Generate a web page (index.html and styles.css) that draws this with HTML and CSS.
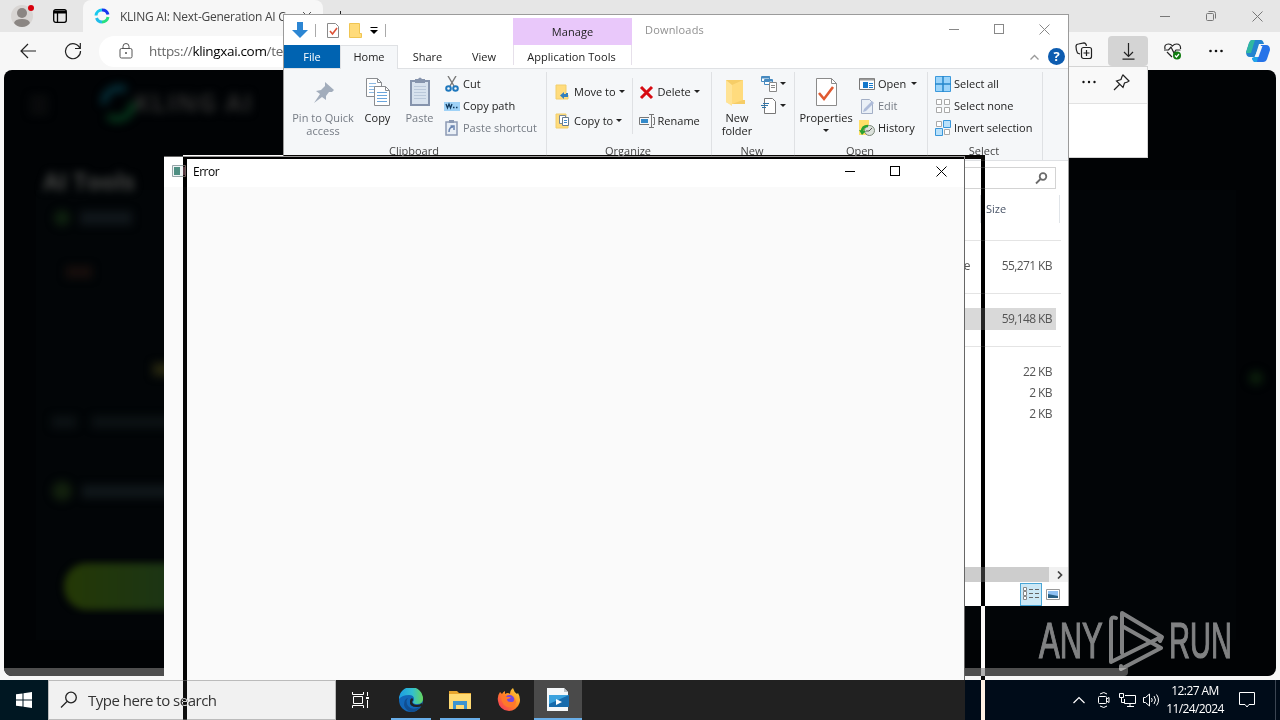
FILE: index.html
```
<!DOCTYPE html>
<html lang="en">
<head>
  <meta charset="utf-8">
  <title>Desktop</title>
  <link rel="stylesheet" href="styles.css">
</head>
<body>

<!-- browser -->
<div class="browser">
  <div class="tabstrip">
    <div class="profile">
      <svg width="26" height="26" viewBox="0 0 26 26"><circle cx="12" cy="13" r="11" fill="#d8d5d3"/><circle cx="12" cy="10" r="5" fill="#8b8683"/><path d="M4 20q1-4 8-4t8 4q-3 4-8 4t-8-4z" fill="#8b8683"/><circle cx="21" cy="5" r="3" fill="#d8000c"/></svg>
    </div>
    <svg class="workspaces" width="14" height="14" viewBox="0 0 14 14" fill="none" stroke="#000" stroke-width="1.3"><rect x=".7" y=".7" width="12.6" height="12.6" rx="2"/><path d="M1 3h12" stroke-width="3"/><path d="M4.5 3v10"/></svg>
    <div class="tab">
      <svg width="16" height="16" viewBox="0 0 16 16" fill="none" stroke-width="3"><path d="M2 7.500a6 6 0 0 1 6-5.500" stroke="#19c9ee"/><path d="M8 2a6 6 0 0 1 6 4.500" stroke="#1636ef"/><path d="M14 9a6 6 0 0 1-6 5" stroke="#26df80"/><path d="M8 14a6 6 0 0 1-5.500-4" stroke="#20bce9"/></svg>
      <span>KLING AI: Next-Generation AI C</span>
      <svg class="tab-x" width="10" height="10" viewBox="0 0 10 10" stroke="#555"><path d="M1 1l8 8M9 1L1 9"/></svg>
    </div>
    <div class="newtab"></div>
    <div class="caps">
      <svg width="10" height="10" viewBox="0 0 10 10" fill="none" stroke="#777"><path d="M0 5.5h10"/></svg>
      <svg width="10" height="10" viewBox="0 0 10 10" fill="none" stroke="#777"><rect x=".5" y="2.5" width="7" height="7" rx="1"/><path d="M2.500 .5h5a2 2 0 0 1 2 2v5"/></svg>
      <svg width="11" height="11" viewBox="0 0 11 11" fill="none" stroke="#777"><path d="M.5.5l10 10M10.500.5l-10 10"/></svg>
    </div>
  </div>
  <div class="toolbar">
    <svg class="back" width="17" height="16" viewBox="0 0 17 16" fill="none" stroke="#222" stroke-width="1.200"><path d="M16 8H1M8 1L1 8l7 7"/></svg>
    <svg class="reload" width="18" height="18" viewBox="0 0 18 18" fill="none" stroke="#222" stroke-width="1.200"><path d="M16 6.500A7.500 7.500 0 1 0 16.500 9M16.300 1v5.500H11"/></svg>
    <div class="address">
      <svg width="14" height="16" viewBox="0 0 14 16" fill="none" stroke="#555"><rect x="1" y="5.500" width="12" height="9.500" rx="1.500"/><path d="M4 5V3.500a3 3 0 0 1 6 0V5"/><circle cx="7" cy="10" r=".6" fill="#555"/></svg>
      <span>https://<b>klingxai.com</b>/te</span>
    </div>
    <div class="tools">
      <svg width="18" height="18" viewBox="0 0 18 18" fill="none" stroke="#222" stroke-width="1.200"><path d="M5 12L2.500 11Q1 8 1 4.500 1 2 3.500 2L9 .8q2 0 2.500 3"/><rect x="6.500" y="5.500" width="10" height="11" rx="2"/><path d="M8.500 11h6M11.500 8v6"/></svg>
      <div class="dl-btn"><svg width="13" height="17" viewBox="0 0 13 17" fill="none" stroke="#222" stroke-width="1.200"><path d="M6.500 0v13M2 9l4.500 4.500L11 9M.5 16.200h12"/></svg></div>
      <svg width="18" height="17" viewBox="0 0 18 17" fill="none" stroke="#222" stroke-width="1.200"><path d="M1 6Q0 1 4.500 1 7 1 8.500 3 10 1 12.500 1 17 1 16.500 6M0 7h4.500L7 4l3 6 2-3h4.500M3 9l5 5"/><circle cx="13" cy="12.500" r="4" fill="#107c10" stroke="none"/><path d="M11 12.500l1.500 1.500 2.500-3" stroke="#fff"/></svg>
      <svg width="14" height="4" viewBox="0 0 14 4" fill="#111"><circle cx="1.500" cy="2" r="1.300"/><circle cx="7" cy="2" r="1.300"/><circle cx="12.500" cy="2" r="1.300"/></svg>
      <svg width="24" height="22" viewBox="0 0 24 22"><path d="M6 0h9q2 0 3 4H13L9 17H4q-4 0-4-5L3 3q1-3 3-3z" fill="#2484cf"/><path d="M3 3q1-3 3-3h3L5 13l-5 0z" fill="#30b8a0"/><path d="M15 5h5q4 0 4 5l-3 9q-1 3-4 3H9q-2 0-3-4h5z" fill="#2673e8"/><path d="M8 17h4l-1 5H9q-2 0-3-4z" fill="#22a6e9"/><path d="M13.500 6h3l-4 11H8.500z" fill="#f7f7f7"/></svg>
    </div>
  </div>
  <div class="page">
    <svg class="page-art" width="1272" height="598" viewBox="4 70 1272 598">
      <defs>
        <filter id="soft" x="-20%" y="-50%" width="140%" height="200%" color-interpolation-filters="sRGB"><feGaussianBlur stdDeviation="4.500"/></filter>
        <filter id="edge" color-interpolation-filters="sRGB"><feGaussianBlur stdDeviation="3.500"/></filter>
        <linearGradient id="cta" x1="0" x2="1"><stop offset="0" stop-color="#243806"/><stop offset=".5" stop-color="#1c3514"/><stop offset="1" stop-color="#1e3b22"/></linearGradient>
      </defs>
      <rect x="36" y="190" width="1200" height="450" fill="#030709" opacity=".5"/>
      <g filter="url(#soft)" font-family="Open Sans, sans-serif" font-weight="700">
        <path d="M30 98h18M30 105h18M30 112h18" stroke="#141414" stroke-width="3"/>
        <path d="M104 104a15 15 0 0 1 22-14" stroke="#05303a" stroke-width="7" fill="none"/>
        <path d="M132 102a15 15 0 0 1-24 14" stroke="#06381c" stroke-width="7" fill="none"/>
        <text x="134" y="112" font-size="25" fill="#2c2c2c" textLength="118">KLING AI</text>
        <text x="43" y="190" font-size="24" fill="#464846" textLength="92">AI Tools</text>
        <circle cx="62" cy="218" r="8" fill="#0e200f"/>
        <rect x="80" y="211" width="52" height="14" fill="#10161a"/>
        <rect x="66" y="266" width="26" height="12" fill="#170e0c"/>
        <rect x="153" y="363" width="30" height="13" fill="#26260f"/>
        <rect x="52" y="416" width="24" height="12" fill="#0c1214"/>
        <rect x="92" y="416" width="80" height="12" fill="#0c1214"/>
        <circle cx="62" cy="491" r="10" fill="#12200e"/>
        <rect x="82" y="485" width="90" height="13" fill="#10171a"/>
        <circle cx="1256" cy="378" r="7" fill="#0b1f0c"/>
      </g>
      <rect x="64" y="563" width="200" height="47" rx="23" fill="url(#cta)" filter="url(#edge)"/>
    </svg>
    <div class="page-scroll"></div>
  </div>
  <div class="dl-flyout">
    <div class="flyout-head">
      <svg width="14" height="4" viewBox="0 0 14 4" fill="#111"><circle cx="1.500" cy="2" r="1.200"/><circle cx="7" cy="2" r="1.200"/><circle cx="12.500" cy="2" r="1.200"/></svg>
      <svg width="17" height="17" viewBox="0 0 17 17" fill="none" stroke="#222" stroke-width="1.200"><path d="M10 1l6 6-1.500 1-3 1-1.500 4.500L3.500 7 8 5.500 9 2.500zM6.500 10.500L1 16"/></svg>
    </div>
  </div>
</div>

<!-- file explorer -->
<div class="explorer">
  <div class="ex-title">
    <div class="quick">
      <svg width="16" height="16" viewBox="0 0 16 16"><path d="M5 0h6v8h5l-8 8-8-8h5z" fill="#2c86d3"/></svg>
      <i></i>
      <svg class="q-props" width="12" height="15" viewBox="0 0 12 15"><path d="M.5.5h8l3 3v11H.5z" fill="#fff" stroke="#8a8a8a"/><path d="M3 8l2.500 3L10 5" fill="none" stroke="#dd5136" stroke-width="1.600"/></svg>
      <svg class="q-folder" width="13" height="15" viewBox="0 0 13 15"><path d="M.5.5h10v10h2v4h-12z" fill="#ffdb7a" stroke="#f0c552"/></svg>
      <svg class="q-more" width="8" height="7" viewBox="0 0 8 7"><path d="M.5.5h7" stroke="#000"/><path d="M0 3h8L4 7z"/></svg>
      <i></i>
    </div>
    <div class="manage">Manage</div>
    <div class="ex-name">Downloads</div>
    <div class="ex-caps">
      <svg width="11" height="11" viewBox="0 0 11 11" fill="none" stroke="#888"><path d="M0 5.500h10"/></svg>
      <svg width="11" height="11" viewBox="0 0 11 11" fill="none" stroke="#888"><rect x=".5" y=".5" width="9" height="9"/></svg>
      <svg width="11" height="11" viewBox="0 0 11 11" fill="none" stroke="#888"><path d="M.5.5l10 10M10.500.5l-10 10"/></svg>
    </div>
  </div>
  <div class="ex-tabs">
    <span class="file">File</span><span class="home">Home</span><span class="share">Share</span><span class="view">View</span><span class="apptools">Application Tools</span>
    <div class="ex-help">
      <svg width="9" height="6" viewBox="0 0 9 6" fill="none" stroke="#999" stroke-width="1.300"><path d="M.5 5.500l4-4 4 4"/></svg>
      <b>?</b>
    </div>
  </div>
  <div class="ribbon">
    <div class="group clipboard">
      <div class="tools-row">
        <div class="big dim pin">
          <svg width="32" height="32" viewBox="0 0 32 32"><path d="M18 6l9 8-2 2-3 0-3 4 0 4-4-3-8 6 6-9-4-3 5-1 4-4z" fill="#a2adbc"/></svg>
          <span>Pin to Quick<br>access</span>
        </div>
        <div class="big copy">
          <svg width="32" height="32" viewBox="0 0 32 32" fill="#fff" stroke="#8a8d91"><path d="M4.500 2.500h11l4 4v14h-15z"/><path d="M15.500 2.500v4h4" fill="none"/><path d="M7 7.500h7M7 10.500h9M7 13.500h6M7 16.500h6" stroke="#8db9e2"/><path d="M12.500 10.500h11l4 4v15h-15z"/><path d="M23.500 10.500v4h4" fill="none"/><path d="M15 16.500h10M15 19.500h10M15 22.500h10M15 25.500h10" stroke="#6aa5dc"/></svg>
          <span>Copy</span>
        </div>
        <div class="big dim paste">
          <svg width="32" height="32" viewBox="0 0 32 32"><rect x="7" y="5" width="18" height="24" fill="#d8e2ee" stroke="#8694ad" stroke-width="2"/><path d="M11 3h3q2-3 4 0h3v4H11z" fill="#8694ad"/><path d="M10 10.500h12M10 13.500h12M10 16.500h12M10 19.500h12M10 22.500h12" stroke="#bac8da"/></svg>
          <span>Paste</span>
        </div>
        <div class="small-col">
          <div><svg width="16" height="16" viewBox="0 0 16 16" fill="none" stroke="#787878" stroke-width="1.400"><path d="M4 0l6 10M12 0L6 10"/><g stroke="#1f78bd" stroke-width="2"><circle cx="4.500" cy="12.500" r="2.300"/><circle cx="11.500" cy="12.500" r="2.300"/></g></svg><span>Cut</span></div>
          <div><svg width="16" height="16" viewBox="0 0 16 16"><rect x="0" y="4" width="16" height="9" fill="#9fd2f7"/><path d="M2 6l1.500 4L5 6l1.500 4L8 6M9 9.500h1.500M12 9.500h1.500" fill="none" stroke="#123a5e" stroke-width="1.300"/></svg><span>Copy path</span></div>
          <div class="dim"><svg width="16" height="16" viewBox="0 0 16 16"><rect x="2" y="2" width="11" height="13" fill="#e9eff6" stroke="#8c9ab4" stroke-width="1.500"/><path d="M5 0h5v3H5z" fill="#8c9ab4"/><path d="M5 12q0-5 4-5M6.500 6H10v4" fill="none" stroke="#6984b0" stroke-width="1.500"/></svg><span>Paste shortcut</span></div>
        </div>
      </div>
      <div class="caption">Clipboard</div>
    </div>
    <div class="group organize">
      <div class="tools-row">
        <div class="small-col roomy">
          <div><svg width="16" height="16" viewBox="0 0 16 16"><path d="M1 1h10v10h2v4H1z" fill="#ffdc7d" stroke="#f1ce6d"/><path d="M13 9v4H9v2l-4-3.500L9 8v2h2V9z" fill="#347fbd"/></svg><span>Move to</span><i class="arr"></i></div>
          <div><svg width="16" height="16" viewBox="0 0 16 16"><path d="M1 1h10v10h2v4H1z" fill="#ffdc7d" stroke="#f1ce6d"/><path d="M4.500 2.500h6v8h-6z" fill="#fff" stroke="#788796"/><path d="M7.500 4.500h6v8h-6z" fill="#fff" stroke="#677b90"/><path d="M9 7.500h3M9 9.500h3" stroke="#408acb"/></svg><span>Copy to</span><i class="arr"></i></div>
        </div>
        <div class="rule"></div>
        <div class="small-col roomy">
          <div><svg width="16" height="16" viewBox="0 0 16 16" stroke="#d70b12" stroke-width="3"><path d="M2 3l11 11M13 3L2 14"/></svg><span>Delete</span><i class="arr"></i></div>
          <div><svg width="16" height="16" viewBox="0 0 16 16" fill="none" stroke="#777"><path d="M10 4.500H.5v7H10M14 4.500h1.500v7H14"/><path d="M2 6h7v4H2z" fill="#348aca" stroke="none"/><path d="M10 1.500h5M12.500 1.500v13M10 14.500h5"/></svg><span>Rename</span></div>
        </div>
      </div>
      <div class="caption">Organize</div>
    </div>
    <div class="group new">
      <div class="tools-row">
        <div class="big newf">
          <svg width="32" height="32" viewBox="0 0 32 32"><path d="M5 4h17v20h2v4H9l-4-2z" fill="#f6cd67"/><path d="M5 4l6 5v21l-6-4z" fill="#ffe395"/><path d="M11 9l11-5v20l-11 4z" fill="#ffdb7d"/></svg>
          <span>New<br>folder</span>
        </div>
        <div class="small-col tight">
          <div><svg width="16" height="16" viewBox="0 0 16 16" fill="#fff" stroke="#478ac0"><path d="M.5.500h8v5h-8zM3.500 3.500h8v5h-8z"/><path d="M1 1.500h8M4 4.500h7" stroke-width="2"/><path d="M8.500 6.500h7v9h-7zM10 9.500h4M10 11.500h4" stroke="#888"/></svg><i class="arr"></i></div>
          <div><svg width="16" height="16" viewBox="0 0 16 16" fill="#fff" stroke="#777"><path d="M3.500 .500h8l3 3v12h-11z"/><path d="M0 7.500h7M2 5.500h6M1 9.500h4" stroke="#3176a9"/></svg><i class="arr"></i></div>
        </div>
      </div>
      <div class="caption">New</div>
    </div>
    <div class="group open">
      <div class="tools-row">
        <div class="big props">
          <svg width="32" height="32" viewBox="0 0 32 32"><path d="M6.500 2.500h15l5 5v22h-20z" fill="#fff" stroke="#8b8b8b"/><path d="M21.500 2.500v5h5" fill="none" stroke="#8b8b8b"/><path d="M9 17l5 6 9-12" fill="none" stroke="#e05a31" stroke-width="2.600"/></svg>
          <span>Properties</span><i class="arr"></i>
        </div>
        <div class="small-col">
          <div><svg width="16" height="16" viewBox="0 0 16 16"><path d="M.5 2.500h15v11H.5z" fill="#fff" stroke="#777"/><path d="M1 3.500h14" stroke="#9a9a9a" stroke-width="2"/><path d="M4 6h5v6H4z" fill="#1679cb"/><path d="M10 7.500h4M10 9.500h4M10 11.500h4" stroke="#1679cb"/></svg><span>Open</span><i class="arr"></i></div>
          <div class="dim"><svg width="16" height="16" viewBox="0 0 16 16"><path d="M2.500 1.500h8l3 3v11h-11z" fill="#eaf0f7" stroke="#a3afc6"/><path d="M4 14l1-3 8-8 2 2-8 8z" fill="#aebcda"/></svg><span>Edit</span></div>
          <div><svg width="16" height="16" viewBox="0 0 16 16"><path d="M0 0h10v10h2v5H0z" fill="#ffdf68"/><circle cx="10.500" cy="10.500" r="5" fill="#dce2dc" stroke="#7b887b"/><path d="M10 11l3-3M10 11h-3" stroke="#555"/><path d="M3 12q0-6 6-6" fill="none" stroke="#2aa132" stroke-width="2.500"/><path d="M0 10l3 5 4-4z" fill="#2aa132"/></svg><span>History</span></div>
        </div>
      </div>
      <div class="caption">Open</div>
    </div>
    <div class="group select">
      <div class="tools-row">
        <div class="small-col">
          <div><svg width="16" height="16" viewBox="0 0 16 16"><path d="M.5.500h15v15H.5z" fill="#9bd4fa" stroke="#3b99dc"/><path d="M8 0v16M0 8h16" stroke="#2687cb" stroke-width="1.500"/></svg><span>Select all</span></div>
          <div><svg width="16" height="16" viewBox="0 0 16 16" fill="#fff" stroke="#a9a9a9"><path d="M1.500 1.500h5v5h-5zM9.500 1.500h5v5h-5zM1.500 9.500h5v5h-5zM9.500 9.500h5v5h-5z"/></svg><span>Select none</span></div>
          <div><svg width="16" height="16" viewBox="0 0 16 16" fill="#b9e1fb" stroke="#3997da"><path d="M1.500 1.500h5v5h-5zM9.500 9.500h5v5h-5z" fill="#fff" stroke="#a9a9a9"/><path d="M8.500.500h7v7h-7zM.500 8.500h7v7h-7z"/></svg><span>Invert selection</span></div>
        </div>
      </div>
      <div class="caption">Select</div>
    </div>
  </div>
  <div class="ex-search"><svg width="13" height="13" viewBox="0 0 13 13" fill="none" stroke="#6b6b6b" stroke-width="1.800"><circle cx="8" cy="4.500" r="3.300"/><path d="M5.500 7L1 11.500"/></svg></div>
  <div class="listing">
    <div class="cols"><span>Size</span></div>
    <div class="line"></div>
    <div class="row first"><em>e</em><span>55,271 KB</span></div>
    <div class="line"></div>
    <div class="row sel"><span>59,148 KB</span></div>
    <div class="line"></div>
    <div class="row last"><span>22 KB</span></div>
    <div class="row"><span>2 KB</span></div>
    <div class="row"><span>2 KB</span></div>
  </div>
  <div class="hscroll"><div class="thumb"></div><svg width="6" height="8" viewBox="0 0 6 8" fill="none" stroke="#444" stroke-width="1.700"><path d="M1 .5L4.500 4 1 7.500"/></svg></div>
  <div class="status">
    <div class="view-btn on"><svg width="16" height="14" viewBox="0 0 16 14" fill="#fff" stroke="#888"><path d="M.5.500h3v3h-3zM.5 4.500h3v4h-3zM.5 9.500h3v3h-3z"/><path d="M6 2.500h4M12 2.500h4M6 6.500h4M12 6.500h4M6 10.500h4M12 10.500h4" stroke="#666"/></svg></div>
    <div class="view-btn"><svg width="14" height="11" viewBox="0 0 14 11"><path d="M.5.500h13v10H.5z" fill="#fff" stroke="#999"/><path d="M2 2h10v7H2z" fill="#8fc0f2"/><path d="M2 5l10 2v2H2z" fill="#275e83"/></svg></div>
  </div>
</div>

<!-- error dialog -->
<div class="dialog">
  <div class="dlg-title">
    <svg width="14" height="12" viewBox="0 0 14 12"><path d="M.5.500h13v11H.5z" fill="#eef3f4" stroke="#96a5a8"/><path d="M2 2h6v8H2z" fill="#4f8f83"/><path d="M11 2h2v8h-2z" fill="#a9c7bf"/></svg>
    <span>Error</span>
    <div class="dlg-caps">
      <svg width="11" height="11" viewBox="0 0 11 11" fill="none" stroke="#000"><path d="M1 5.500h10"/></svg>
      <svg width="11" height="11" viewBox="0 0 11 11" fill="none" stroke="#000"><rect x=".5" y=".5" width="9" height="9"/></svg>
      <svg width="11" height="11" viewBox="0 0 11 11" fill="none" stroke="#000"><path d="M.5.5l10 10M10.500.5l-10 10"/></svg>
    </div>
  </div>
</div>

<!-- taskbar -->
<div class="taskbar">
  <div class="start"><svg width="16" height="16" viewBox="0 0 16 16" fill="#fff"><path d="M0 2.300l6.500-.9v6.100H0zM7.500 1.200L16 0v7.500H7.500zM0 8.500h6.500v6.100L0 13.700zM7.500 8.500H16V16l-8.500-1.200z"/></svg></div>
  <div class="search">
    <svg width="18" height="18" viewBox="0 0 18 18" fill="none" stroke="#222" stroke-width="1.300"><circle cx="11" cy="6.500" r="5.300"/><path d="M7 10.500L1 16.500"/></svg>
    <span>Type here to search</span>
  </div>
  <div class="apps">
    <div class="app taskview"><svg width="17" height="16" viewBox="0 0 17 16" fill="none" stroke="#fff"><path d="M.5 0v2.500h11V0M.5 16v-2.500h11V16M1.500 4.500h9v7h-9zM15.500 0v4M15.500 8v8"/><path d="M14 5h3v2h-3z" fill="#fff" stroke="none"/></svg></div>
    <div class="app open-app"><svg width="24" height="24" viewBox="0 0 24 24"><defs><linearGradient id="eg" x1="0" x2="1"><stop offset="0" stop-color="#1b9de2"/><stop offset=".55" stop-color="#32bfd0"/><stop offset="1" stop-color="#66d65c"/></linearGradient></defs><circle cx="12" cy="12" r="12" fill="#1267b8"/><path d="M0 11A12 12 0 0 1 24 11q0 5-6 5-4 0-4-2 1-1 1-3 0-4-5-4-7 0-10 4z" fill="url(#eg)"/><path d="M9 10q-3 3 0 8 4 5 12 1-3 5-9 5Q6 22 5 17q0-6 4-7z" fill="#104e91"/><path d="M13 14q1 3 5 3 3 0 5-2v3q-2 1-5 1-8 0-7-6 0-2 2-3 2 1 0 4z" fill="#212121"/></svg></div>
    <div class="app open-app"><svg width="22" height="18" viewBox="0 0 22 18"><path d="M0 0h8l2 2h12v16H0z" fill="#e7a52e"/><path d="M0 3h22v15H0z" fill="#ffda73"/><path d="M4 10h14v8h-3v-4H7v4H4z" fill="#3d94cf"/></svg></div>
    <div class="app"><svg width="24" height="24" viewBox="0 0 24 24"><defs><linearGradient id="fx" x1="1" x2="0" y2="1"><stop offset="0" stop-color="#ffe13c"/><stop offset=".5" stop-color="#ff8324"/><stop offset="1" stop-color="#f52b68"/></linearGradient></defs><path d="M3 4l2 2q1-2 3-3v3q3-2 5 0 0-4 3-6 1 4 4 6l1-1q3 5 1.500 10A11 11 0 0 1 1 13Q0 8 3 4z" fill="url(#fx)"/><circle cx="12.500" cy="12" r="5" fill="#7548dd"/><path d="M4 8q4-1 6 1h4q-1 2-4 2 0 3 4 3 4 0 3-4 4 4 0 8-5 3-10-1-3-4-3-9z" fill="#ff782b"/></svg></div>
    <div class="app open-app active"><svg width="24" height="24" viewBox="0 0 24 24"><path d="M1 0h17l4 4v19H1z" fill="#f5f8fa"/><path d="M18 0v4h4z" fill="#b9c1c6"/><path d="M3 7h20v12H3z" fill="#176bac"/><path d="M3 7h20L3 16z" fill="#3ba3df"/><path d="M10 11l6 3-6 3z" fill="#fff"/></svg></div>
  </div>
  <div class="tray">
    <svg width="12" height="8" viewBox="0 0 12 8" fill="none" stroke="#fff" stroke-width="1.200"><path d="M.5 7L6 1.500 11.500 7"/></svg>
    <svg class="meet" width="12" height="16" viewBox="0 0 12 16" fill="none" stroke="#fff"><rect x=".5" y="4.500" width="8" height="7" rx="1"/><path d="M8.500 7l2.500-1.500v5L8.500 9M2 2q4-3 7 0M2 14q4 3 7 0"/></svg>
    <svg class="net" width="17" height="14" viewBox="0 0 17 14" fill="none" stroke="#fff"><path d="M6 2.500h10.500v8H5.500V6M8 13.500h7M11 10.500v3M.500 .500h4v4h-4zM2.500 5v4.500H5"/></svg>
    <svg class="vol" width="17" height="14" viewBox="0 0 17 14" fill="none" stroke="#fff"><path d="M.500 4.500h2L6.500 1v12L2.500 9.500h-2zM8.500 5q1.500 2 0 4M11 3q3 4 0 8M13.500 1.500q4 5.500 0 11"/></svg>
    <div class="clock">12:27 AM<br>11/24/2024</div>
    <svg class="notes" width="16" height="16" viewBox="0 0 16 16" fill="none" stroke="#fff"><path d="M.5.500h15v12H10l-2 2.500-2-2.500H.5z"/></svg>
    <div class="peek"></div>
  </div>
</div>

<div class="watermark">
  <span class="any">ANY</span>
  <svg width="58" height="64" viewBox="72 0 58 64" fill="none" stroke="#fff" stroke-width="4" stroke-linejoin="round" stroke-linecap="round">
    <path d="M86 44V4l40 24-2 4M80 9q-5-2-5 3v41l50-25"/>
    <path d="M86 17l39 22-40 21v-3"/>
  </svg>
  <span class="run">RUN</span>
</div>

<!-- outline shown while the dialog is dragged, inverts what is below -->
<div class="drag-frame"></div>

</body>
</html>
```
FILE: styles.css
```
:root { --ui:"Open Sans","Noto Sans",sans-serif; --dim:#767c85; --line:#dfe1e4; }
*{box-sizing:border-box}
html,body{height:100%}
body{margin:0;width:1280px;height:720px;overflow:hidden;position:relative;
     background:#000;font:11px/13px var(--ui);color:#222}
svg{display:block;flex:none}

/* browser */
.browser{position:absolute;left:0;top:0;width:1280px;height:680px;background:#f7f7f7}
.tabstrip{height:32px;background:#e6e6e6;display:flex;align-items:center}
.profile{margin-left:10px}
.workspaces{margin-left:17px}
.tab{margin-left:16px;width:240px;height:32px;background:#f7f7f7;border-radius:8px 8px 0 0;
     display:flex;align-items:center;padding-left:11px;font-size:12px;color:#444}
.tab span{margin-left:10px;white-space:nowrap;width:172px;letter-spacing:-.25px}
.tab-x{margin-left:10px}
.newtab{width:1px;height:10px;background:#222;margin-left:17px}
.caps{margin-left:auto;display:flex;align-items:center;gap:36px;padding-right:17px}
.toolbar{height:38px;display:flex;align-items:center}
.back{margin-left:20px}
.reload{margin-left:27px}
.address{margin-left:17px;width:240px;height:31px;border-radius:16px;background:#fff;
         display:flex;align-items:center;padding-left:20px;font-size:13.500px;color:#666}
.address span{margin-left:16px;letter-spacing:-.33px}
.address b{font-weight:400;color:#000}
.tools{margin-left:auto;display:flex;align-items:center;padding-right:10px}
.dl-btn{width:40px;height:30px;margin:0 16px 0 15px;border-radius:4px;background:#d4d4d4;
        display:grid;place-content:center}
.tools>svg:nth-last-child(2){margin:0 23px 0 27px}
.page{margin:0 4px;height:606px;border-radius:8px;overflow:hidden;background:#010305;
      display:flex;flex-direction:column}
.page-scroll{width:1124px;height:8px;background:#4e4e4e;border-radius:0 0 4px 4px;flex:none}
.dl-flyout{position:absolute;left:1000px;top:66px;width:148px;height:92px;background:#fff;
           border:1px solid #d4d4d4}
.flyout-head{height:37px;border-bottom:1px solid #e2e2e2;background:#f9f9f9;
             display:flex;align-items:center;justify-content:flex-end;gap:17px;padding:0 17px 6px 0}

/* file explorer */
.explorer{position:absolute;left:283px;top:14px;width:786px;height:592px;background:#fff;
          border:1px solid #9b9b9b;border-bottom:0;display:flex;flex-direction:column}
.ex-title{height:30px;display:flex;flex:none}
.quick{width:229px;display:flex;align-items:center;padding-left:8px}
.quick i{width:1px;height:13px;background:#aaa;margin:0 0 0 7px}
.q-props{margin-left:11px}
.q-folder{margin-left:10px}
.q-more{margin-left:8px}
.manage{width:119px;margin-top:3px;background:#e9c8fa;text-align:center;line-height:28px;letter-spacing:.1px}
.ex-name{padding-left:13px;line-height:30px;color:#909090;letter-spacing:.18px}
.ex-caps{margin-left:auto;display:flex;align-items:center;gap:34px;padding:0 18px 2px 0}
.ex-tabs{height:24px;display:flex;flex:none;line-height:24px;border-bottom:1px solid var(--line);text-align:center}
.file{width:56px;height:23px;background:#0063b1;color:#fff}
.home{width:58px;height:24px;background:#f5f7f9;border:1px solid var(--line);border-bottom:0;line-height:22px}
.share{width:59px}
.view{width:54px}
.apptools{width:119px;margin-left:2px;padding-right:2px;white-space:nowrap;border:solid #e6e0ea;border-width:0 1px;height:20px;letter-spacing:.06px}
.ex-help{margin-left:auto;display:flex;align-items:center;gap:9px;padding-right:3px}
.ex-help b{width:17px;height:17px;border-radius:50%;background:#0d5cb0;color:#fff;line-height:17px;font-size:13px}
.ribbon{height:92px;display:flex;flex:none;background:#f5f7f9;border-bottom:1px solid var(--line)}
.group{margin-top:3px;height:88px;border-right:1px solid var(--line);display:flex;flex-direction:column;white-space:nowrap}
.tools-row{display:flex;height:72px}
.caption{text-align:center;color:#444;padding-right:2px}
.clipboard{width:263px}
.organize{width:165px}
.new{width:83px}
.open{width:133px}
.select{width:115px}
.dim{color:var(--dim)}
.big{display:flex;flex-direction:column;align-items:center;text-align:center;padding-top:4px}
.big span{margin-top:3px}
.pin{width:64px;margin-left:7px}
.copy{width:45px}
.paste{width:39px}
.newf{width:50px}
.props{width:58px;margin-left:2px}
.props .arr{margin:5px 0 0}
.small-col>div{height:22px;display:flex;align-items:center}
.small-col svg{margin-top:1px}
.small-col span{margin-left:3px}
.clipboard .small-col{margin-left:5px}
.roomy{margin-left:8px;padding-top:5px}
.roomy>div{height:29px}
.rule{width:1px;height:56px;margin-top:6px;background:var(--line);margin-left:7px}
.rule+.small-col{margin-left:6px}
.tight{margin-left:-1px}
.open .small-col{margin-left:4px}
.select .small-col{margin-left:7px}
.arr{width:0;height:0;border:3px solid transparent;border-top-color:#222;border-bottom:0;margin-left:5px}
.roomy .arr,.tight .arr{margin-left:3px}
.ex-search{height:22px;margin:6px 12px 0 0;border:1px solid #d3d3d3;flex:none;
           display:flex;align-items:center;justify-content:flex-end;padding-right:7px}
.listing{margin:6px 7px 0 0;height:372px;flex:none}
.cols{height:28px;margin:0 1px 0 696px;border:solid #e0e4e8;border-width:0 1px;padding-left:5px;
      line-height:28px;color:#4a5568}
.line{height:1px;background:#e4e4e4;margin-top:17px}
.row{height:21px;line-height:21px;margin-right:5px;padding-right:4px;display:flex;color:#555;font-size:12px;letter-spacing:-.6px}
.row span{margin-left:auto}
.row em{font-style:normal;width:686px;text-align:right}
.row.first{margin-top:14px}
.row.sel{height:22px;background:#d9d9d9;margin-top:14px}
.line+.row.last{margin-top:14px}
.row.first+.line{margin-top:17px}
.row.sel+.line{margin-top:16px}
.hscroll{height:15px;background:#f1f1f1;display:flex;align-items:center;flex:none}
.thumb{width:765px;height:15px;background:#cdcdcd}
.hscroll svg{margin-left:8px}
.status{flex:1;display:flex;justify-content:flex-end;align-items:center;padding-right:4px}
.view-btn{width:22px;height:23px;display:grid;place-content:center}
.view-btn.on{background:#cce8f6;border:1px solid #4aa6d6}

/* dialog */
.dialog{position:absolute;left:164px;top:156px;width:801px;height:540px;background:#fafafa;
        border:solid #666;border-width:1px 1px 0 0}
.dlg-title{height:30px;background:#fff;display:flex;align-items:center;padding:0 0 2px 8px;color:#000;font-size:12px}
.dlg-title span{margin-left:7px;letter-spacing:-.5px}
.dlg-caps{margin-left:auto;display:flex;gap:35px;padding-right:17px}

/* taskbar */
.taskbar{position:absolute;left:0;top:680px;width:1280px;height:40px;background:#000c19;display:flex;color:#fff}
.start{width:48px;background:#001722;display:grid;place-content:center}
.search{width:288px;background:#f1f1f1;border:1px solid #bbb;display:flex;align-items:center;
        padding-left:11px;font-size:15px;color:#333}
.search span{margin-left:10px;letter-spacing:-.5px}
.apps{width:629px;background:#212121;display:flex;padding-left:2px}
.app{width:48px;margin-right:1px;display:grid;place-content:center}
.taskview{padding-right:4px}
.open-app{background:linear-gradient(#69aee8,#69aee8) center bottom/40px 2px no-repeat}
.active{background-color:#4a4a4a;background-size:48px 2px}
.tray{margin-left:auto;display:flex;align-items:center;font-size:12px;line-height:18px}
.meet{margin-left:13px}
.net{margin-left:9px}
.vol{margin-left:7px}
.clock{width:74px;margin-left:-2px;text-align:center;letter-spacing:-.6px;white-space:nowrap}
.notes{margin-left:7px}
.peek{width:1px;height:40px;background:#3b4552;margin:0 4px 0 20px}

/* watermark, narrow caps */
.watermark{position:absolute;left:1039px;top:609px;height:64px;opacity:.5;display:flex;
           font:50px/64px "Liberation Sans",sans-serif;color:#fff;-webkit-text-stroke:1.2px #fff}
.watermark span{display:block;transform-origin:0 50%;white-space:nowrap}
.any{width:69px;transform:scaleX(.62)}
.run{width:64px;transform:scaleX(.58);margin-left:3px}

.drag-frame{position:absolute;left:183px;top:155px;width:802px;height:600px;
            border:4px solid #fff;mix-blend-mode:difference}
```
